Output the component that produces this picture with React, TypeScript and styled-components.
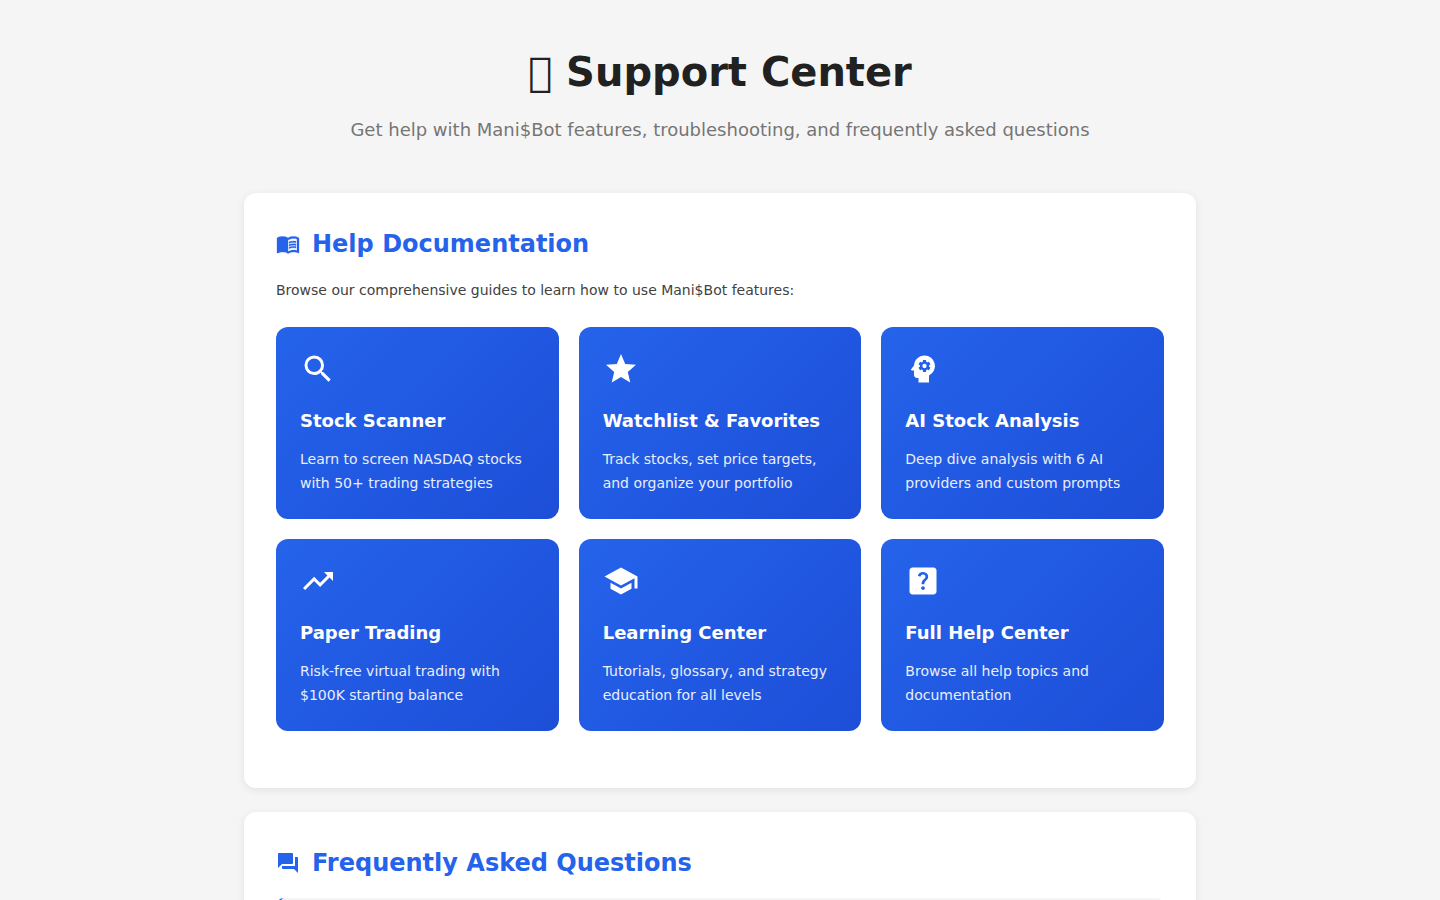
import React from "react";
import styled, { createGlobalStyle } from "styled-components";
import type { IconType } from "react-icons";
import {
  MdForum,
  MdHelpCenter,
  MdMenuBook,
  MdPsychology,
  MdSchool,
  MdSearch,
  MdStar,
  MdTrendingUp,
} from "react-icons/md";

const GlobalStyle = createGlobalStyle`
  *, *::before, *::after { box-sizing: border-box; }
  body {
    margin: 0;
    background: #f5f5f5;
    color: #212121;
    font-family: "DejaVu Sans", sans-serif;
    font-size: 14px;
    line-height: 24px;
  }
`;

const Page = styled.main`
  max-width: 1000px;
  margin: 0 auto;
  padding: 24px;
`;

const Header = styled.header`
  text-align: center;
  padding: 14px 0 48px;
`;

const PageTitle = styled.h1`
  margin: 0 0 8px;
  font-size: 40px;
  line-height: 68px;
  font-weight: 700;
`;

const Subtitle = styled.p`
  margin: 0;
  font-size: 18px;
  line-height: 31px;
  color: #757575;
`;

const Section = styled.section`
  padding: 32px;
  margin-bottom: 24px;
  background: #fff;
  border-radius: 12px;
  box-shadow: 0 2px 8px rgba(0, 0, 0, 0.08);
`;

const SectionTitle = styled.h2`
  display: flex;
  align-items: center;
  gap: 12px;
  margin: 0 0 16px;
  color: #2563eb;
  font-size: 24px;
  line-height: 38px;
  font-weight: 700;
`;

const BookIcon = styled(MdMenuBook)`
  path:not([fill="none"]) {
    stroke-width: 0.3;
  }
`;

const Intro = styled.p`
  margin: 0 0 26px;
  line-height: 22px;
  color: #424242;
`;

const CardGrid = styled.div`
  display: grid;
  grid-template-columns: repeat(auto-fit, minmax(250px, 1fr));
  gap: 20px;
  margin-bottom: 25px;
`;

const Card = styled.a`
  display: block;
  padding: 24px;
  border-radius: 12px;
  background: linear-gradient(135deg, #2563eb 0%, #1d4ed8 100%);
  color: #fff;
  text-decoration: none;

  svg {
    display: block;
    margin-bottom: 20px;
  }
`;

const CardTitle = styled.h3`
  margin: 0 0 12px;
  font-size: 18px;
  line-height: 28px;
  font-weight: 700;
`;

const CardText = styled.p`
  margin: 0;
  opacity: 0.9;
`;

const FaqItem = styled.details`
  margin-bottom: 16px;
  padding: 20px;
  border-left: 4px solid #2563eb;
  border-radius: 8px;
  background: #f5f5f5;
`;

const FaqQuestion = styled.summary`
  font-size: 16px;
  font-weight: 700;
  cursor: pointer;
`;

interface Guide {
  icon: IconType;
  title: string;
  text: string;
}

const guides: Guide[] = [
  { icon: MdSearch, title: "Stock Scanner", text: "Learn to screen NASDAQ stocks with 50+ trading strategies" },
  { icon: MdStar, title: "Watchlist & Favorites", text: "Track stocks, set price targets, and organize your portfolio" },
  { icon: MdPsychology, title: "AI Stock Analysis", text: "Deep dive analysis with 6 AI providers and custom prompts" },
  { icon: MdTrendingUp, title: "Paper Trading", text: "Risk-free virtual trading with $100K starting balance" },
  { icon: MdSchool, title: "Learning Center", text: "Tutorials, glossary, and strategy education for all levels" },
  { icon: MdHelpCenter, title: "Full Help Center", text: "Browse all help topics and documentation" },
];

export default function App() {
  return (
    <>
      <GlobalStyle />
      <Page>
        <Header>
          <PageTitle>{"\u{F0000}"} Support Center</PageTitle>
          <Subtitle>Get help with Mani$Bot features, troubleshooting, and frequently asked questions</Subtitle>
        </Header>

        <Section>
          <SectionTitle>
            <BookIcon size={24} aria-hidden />
            Help Documentation
          </SectionTitle>
          <Intro>Browse our comprehensive guides to learn how to use Mani$Bot features:</Intro>
          <CardGrid>
            {guides.map(({ icon: Icon, title, text }) => (
              <Card href="#" key={title}>
                <Icon size={36} aria-hidden />
                <CardTitle>{title}</CardTitle>
                <CardText>{text}</CardText>
              </Card>
            ))}
          </CardGrid>
        </Section>

        <Section>
          <SectionTitle>
            <MdForum size={24} aria-hidden />
            Frequently Asked Questions
          </SectionTitle>
          <FaqItem>
            <FaqQuestion />
          </FaqItem>
        </Section>
      </Page>
    </>
  );
}
